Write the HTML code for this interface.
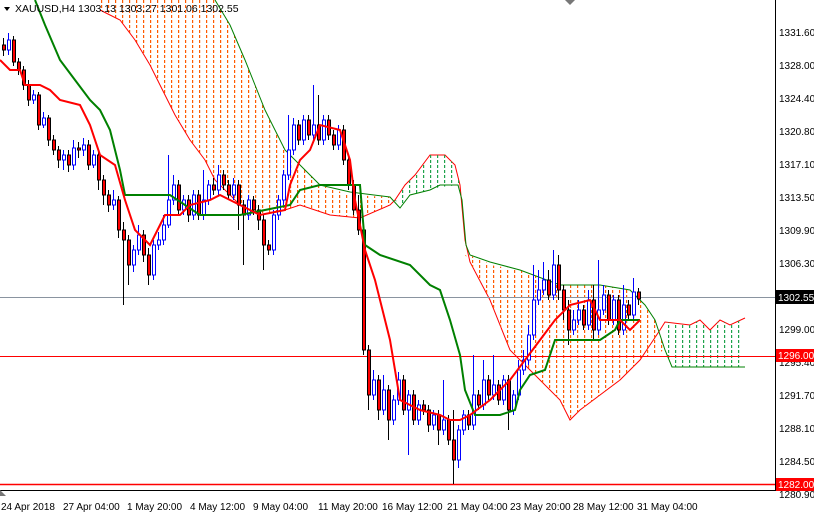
<!DOCTYPE html>
<html><head><meta charset="utf-8"><style>
body{margin:0;background:#fff;width:814px;height:514px;overflow:hidden;font-family:"Liberation Sans",sans-serif}
svg text{font-family:"Liberation Sans",sans-serif;font-size:10px}
</style></head><body>
<svg width="814" height="514" xmlns="http://www.w3.org/2000/svg">
<defs>
<pattern id="po" width="7" height="5" patternUnits="userSpaceOnUse"><rect x="3" y="0" width="1.2" height="3" fill="#ff5a00"/></pattern>
<pattern id="pg" width="7" height="5" patternUnits="userSpaceOnUse"><rect x="3" y="0" width="1.2" height="3" fill="#1fa34a"/></pattern>
</defs>
<rect width="814" height="514" fill="#fff"/>
<polygon fill="url(#po)" points="100,0 215,0 230,25 245,60 255,85 265,110 275,130 285,150 300,165 320,185 350,195 390,197 395,200 390,205 360,218 330,215 300,205 285,210 260,215 240,205 215,180 205,160 190,140 175,115 160,85 150,65 135,40 120,20 100,10"/>
<polyline fill="none" stroke="#ff0000" stroke-width="1" points="100,10 120,20 135,40 150,65 160,85 175,115 190,140 205,160 215,180 240,205 260,215 285,210 300,205 330,215 360,218 390,205 395,200 405,185 415,175 430,155 445,155 455,165 460,185 465,240 470,262 490,300 510,350 530,370 560,400 570,420 580,410 600,395 620,380 640,360 650,345 660,330 665,322 690,325 700,320 710,330 720,320 730,325 745,318"/>
<polygon fill="url(#pg)" points="395,200 405,185 415,175 430,155 445,155 455,165 460,185 440,187 430,190 410,195 400,208"/>
<polygon fill="url(#po)" points="465,255 480,258 490,265 520,270 560,285 600,285 630,290 645,305 655,320 665,350 660,352 640,360 620,380 600,395 580,410 570,420 560,400 530,370 510,350 490,300 470,262"/>
<polygon fill="url(#pg)" points="665,322 690,325 700,320 710,330 720,320 730,325 745,318 745,367 672,367 665,350"/>
<polyline fill="none" stroke="#008000" stroke-width="1" points="215,0 230,25 245,60 255,85 265,110 275,130 285,150 300,165 320,185 350,192 390,197 400,208 410,195 430,190 440,185 458,185 462,200 466,245 470,255 490,262 520,270 560,285 600,285 630,290 645,305 655,320 665,350 672,367 745,367"/>
<line x1="0" y1="297.5" x2="775" y2="297.5" stroke="#8a94a0"/>
<line x1="0" y1="356.5" x2="775" y2="356.5" stroke="#ff0000"/>
<line x1="0" y1="484.5" x2="775" y2="484.5" stroke="#ff0000" stroke-width="1.5"/>

<!-- up candles -->
<g stroke="#0000ff" fill="#fff" shape-rendering="crispEdges">
<path fill="none" d="M8.5 33V55M33.5 90V104M43.5 112V128M63.5 150V170M73.5 140V170M83.5 138V156M93.5 150V168M113.5 190V210M133.5 245V272M138.5 225V255M153.5 240V280M158.5 232V250M163.5 215V245M168.5 155V228M173.5 175V205M183.5 195V215M193.5 190V220M203.5 170V220M208.5 180V205M218.5 165V195M233.5 178V200M248.5 195V220M273.5 210V255M278.5 195V220M283.5 170V205M288.5 115V180M293.5 118V155M303.5 115V145M313.5 85V140M323.5 115V145M338.5 125V150M373.5 370V400M383.5 375V415M393.5 395V425M398.5 372V405M408.5 390V455M418.5 400V425M433.5 410V430M443.5 380V435M458.5 425V468M463.5 410V435M473.5 355V430M483.5 360V410M493.5 355V400M503.5 375V405M513.5 390V415M518.5 360V400M523.5 350V375M528.5 325V365M533.5 265V340M538.5 270V305M543.5 262V295M553.5 250V300M573.5 310V335M578.5 300V325M588.5 290V330M598.5 260V335M603.5 285V315M613.5 295V325M623.5 285V335M633.5 278V320"/>
<rect x="7.5" y="40" width="3" height="10"/><rect x="32.5" y="95" width="3" height="5"/><rect x="42.5" y="118" width="3" height="7"/><rect x="62.5" y="155" width="3" height="5"/><rect x="72.5" y="148" width="3" height="17"/><rect x="82.5" y="145" width="3" height="5"/><rect x="92.5" y="155" width="3" height="10"/><rect x="112.5" y="200" width="3" height="5"/><rect x="132.5" y="250" width="3" height="15"/><rect x="137.5" y="235" width="3" height="15"/><rect x="152.5" y="245" width="3" height="30"/><rect x="157.5" y="240" width="3" height="5"/><rect x="162.5" y="225" width="3" height="15"/><rect x="167.5" y="200" width="3" height="25"/><rect x="172.5" y="185" width="3" height="15"/><rect x="182.5" y="200" width="3" height="10"/><rect x="192.5" y="195" width="3" height="20"/><rect x="202.5" y="200" width="3" height="15"/><rect x="207.5" y="185" width="3" height="15"/><rect x="217.5" y="175" width="3" height="15"/><rect x="232.5" y="185" width="3" height="10"/><rect x="247.5" y="200" width="3" height="15"/><rect x="272.5" y="215" width="3" height="35"/><rect x="277.5" y="200" width="3" height="15"/><rect x="282.5" y="175" width="3" height="25"/><rect x="287.5" y="150" width="3" height="25"/><rect x="292.5" y="125" width="3" height="25"/><rect x="302.5" y="120" width="3" height="20"/><rect x="312.5" y="125" width="3" height="10"/><rect x="322.5" y="120" width="3" height="20"/><rect x="337.5" y="130" width="3" height="15"/><rect x="372.5" y="380" width="3" height="15"/><rect x="382.5" y="390" width="3" height="20"/><rect x="392.5" y="400" width="3" height="20"/><rect x="397.5" y="380" width="3" height="20"/><rect x="407.5" y="395" width="3" height="15"/><rect x="417.5" y="405" width="3" height="15"/><rect x="432.5" y="415" width="3" height="10"/><rect x="442.5" y="420" width="3" height="10"/><rect x="457.5" y="430" width="3" height="30"/><rect x="462.5" y="415" width="3" height="15"/><rect x="472.5" y="395" width="3" height="30"/><rect x="482.5" y="380" width="3" height="25"/><rect x="492.5" y="385" width="3" height="10"/><rect x="502.5" y="380" width="3" height="20"/><rect x="512.5" y="395" width="3" height="15"/><rect x="517.5" y="370" width="3" height="25"/><rect x="522.5" y="360" width="3" height="10"/><rect x="527.5" y="335" width="3" height="25"/><rect x="532.5" y="300" width="3" height="35"/><rect x="537.5" y="290" width="3" height="10"/><rect x="542.5" y="280" width="3" height="10"/><rect x="552.5" y="265" width="3" height="30"/><rect x="572.5" y="320" width="3" height="10"/><rect x="577.5" y="310" width="3" height="10"/><rect x="587.5" y="300" width="3" height="25"/><rect x="597.5" y="310" width="3" height="20"/><rect x="602.5" y="295" width="3" height="15"/><rect x="612.5" y="300" width="3" height="20"/><rect x="622.5" y="305" width="3" height="25"/><rect x="632.5" y="292" width="3" height="23"/>
</g>
<!-- down candles -->
<g stroke="#000" fill="#ff0000" shape-rendering="crispEdges">
<path fill="none" d="M3.5 38V56M13.5 36V66M18.5 58V75M23.5 66V90M28.5 80V106M38.5 92V130M48.5 115V146M53.5 135V155M58.5 146V168M68.5 150V172M78.5 142V158M88.5 140V170M98.5 150V190M103.5 175V205M108.5 190V212M118.5 196V238M123.5 222V305M128.5 235V285M143.5 230V262M148.5 248V285M178.5 180V215M188.5 195V222M198.5 190V220M213.5 178V195M223.5 170V190M228.5 180V200M238.5 180V230M243.5 200V265M253.5 196V215M258.5 205V230M263.5 215V270M268.5 240V255M298.5 120V145M308.5 115V140M318.5 95V145M328.5 115V140M333.5 130V150M343.5 125V165M348.5 155V190M353.5 180V215M358.5 195V235M363.5 225V355M368.5 345V410M378.5 375V420M388.5 385V440M403.5 375V415M413.5 390V425M423.5 400V415M428.5 405V432M438.5 410V445M448.5 415V445M453.5 410V484M468.5 410V430M478.5 390V410M488.5 375V400M498.5 380V405M508.5 375V430M548.5 270V300M558.5 255V300M563.5 285V320M568.5 300V345M583.5 305V330M593.5 285V340M608.5 290V325M618.5 295V335M628.5 300V320M638.5 288V305"/>
<rect x="2.5" y="45" width="3" height="5"/><rect x="12.5" y="40" width="3" height="22"/><rect x="17.5" y="62" width="3" height="8"/><rect x="22.5" y="70" width="3" height="15"/><rect x="27.5" y="85" width="3" height="15"/><rect x="37.5" y="95" width="3" height="30"/><rect x="47.5" y="118" width="3" height="22"/><rect x="52.5" y="140" width="3" height="10"/><rect x="57.5" y="150" width="3" height="10"/><rect x="67.5" y="155" width="3" height="10"/><rect x="77.5" y="148" width="3" height="2"/><rect x="87.5" y="145" width="3" height="20"/><rect x="97.5" y="155" width="3" height="25"/><rect x="102.5" y="180" width="3" height="15"/><rect x="107.5" y="195" width="3" height="10"/><rect x="117.5" y="200" width="3" height="30"/><rect x="122.5" y="230" width="3" height="10"/><rect x="127.5" y="240" width="3" height="25"/><rect x="142.5" y="235" width="3" height="20"/><rect x="147.5" y="255" width="3" height="20"/><rect x="177.5" y="185" width="3" height="25"/><rect x="187.5" y="200" width="3" height="15"/><rect x="197.5" y="195" width="3" height="20"/><rect x="212.5" y="185" width="3" height="5"/><rect x="222.5" y="175" width="3" height="10"/><rect x="227.5" y="185" width="3" height="10"/><rect x="237.5" y="185" width="3" height="20"/><rect x="242.5" y="205" width="3" height="10"/><rect x="252.5" y="200" width="3" height="10"/><rect x="257.5" y="210" width="3" height="10"/><rect x="262.5" y="220" width="3" height="25"/><rect x="267.5" y="245" width="3" height="5"/><rect x="297.5" y="125" width="3" height="15"/><rect x="307.5" y="120" width="3" height="15"/><rect x="317.5" y="125" width="3" height="15"/><rect x="327.5" y="120" width="3" height="15"/><rect x="332.5" y="135" width="3" height="10"/><rect x="342.5" y="130" width="3" height="30"/><rect x="347.5" y="160" width="3" height="25"/><rect x="352.5" y="185" width="3" height="25"/><rect x="357.5" y="210" width="3" height="20"/><rect x="362.5" y="230" width="3" height="120"/><rect x="367.5" y="350" width="3" height="45"/><rect x="377.5" y="380" width="3" height="30"/><rect x="387.5" y="390" width="3" height="30"/><rect x="402.5" y="380" width="3" height="30"/><rect x="412.5" y="395" width="3" height="25"/><rect x="422.5" y="405" width="3" height="5"/><rect x="427.5" y="410" width="3" height="15"/><rect x="437.5" y="415" width="3" height="15"/><rect x="447.5" y="420" width="3" height="20"/><rect x="452.5" y="440" width="3" height="20"/><rect x="467.5" y="415" width="3" height="10"/><rect x="477.5" y="395" width="3" height="10"/><rect x="487.5" y="380" width="3" height="15"/><rect x="497.5" y="385" width="3" height="15"/><rect x="507.5" y="380" width="3" height="30"/><rect x="547.5" y="280" width="3" height="15"/><rect x="557.5" y="265" width="3" height="25"/><rect x="562.5" y="290" width="3" height="20"/><rect x="567.5" y="310" width="3" height="20"/><rect x="582.5" y="310" width="3" height="15"/><rect x="592.5" y="300" width="3" height="30"/><rect x="607.5" y="295" width="3" height="25"/><rect x="617.5" y="300" width="3" height="30"/><rect x="627.5" y="305" width="3" height="10"/><rect x="637.5" y="292" width="3" height="7"/>
</g>

<polyline fill="none" stroke="#008000" stroke-width="2" points="35,0 45,25 60,60 75,80 90,100 100,110 110,130 120,170 125,195 170,195 200,215 240,215 290,205 300,190 320,185 360,185 365,245 380,255 410,265 430,285 440,290 450,320 460,355 465,390 475,415 500,415 515,410 520,390 530,375 545,370 555,340 565,340 600,340 615,330 620,320 640,320"/>
<polyline fill="none" stroke="#ff0000" stroke-width="2" points="0,60 10,70 20,70 25,85 40,85 50,90 60,100 80,105 90,125 100,155 115,165 125,200 135,230 150,245 165,215 180,215 190,205 210,200 220,195 240,205 260,215 285,210 290,185 300,160 310,150 320,125 340,130 350,160 355,200 365,250 375,280 390,340 400,400 420,410 440,415 450,420 460,420 470,415 490,400 510,380 525,360 540,340 555,320 570,305 590,300 600,320 620,320 630,330 640,320"/>
<line x1="775.5" y1="0" x2="775.5" y2="490" stroke="#000"/>
<line x1="0" y1="490.5" x2="776" y2="490.5" stroke="#000"/>
<polygon points="0,490 0,496 6,496" fill="#777"/>
<polygon points="565,0 575,0 570,5" fill="#777"/>
<g fill="#000">
<text x="779" y="36">1331.60</text><text x="779" y="69">1328.00</text><text x="779" y="102">1324.40</text><text x="779" y="135">1320.80</text><text x="779" y="168">1317.10</text><text x="779" y="201">1313.50</text><text x="779" y="234">1309.90</text><text x="779" y="267">1306.30</text><text x="779" y="333">1299.00</text><text x="779" y="366">1295.40</text><text x="779" y="399">1291.70</text><text x="779" y="432">1288.10</text><text x="779" y="465">1284.50</text><text x="779" y="498">1280.90</text>
</g>
<rect x="776" y="290" width="38" height="14" fill="#000"/><text x="778" y="301" fill="#fff">1302.55</text>
<rect x="776" y="349" width="38" height="13" fill="#ff0000"/><text x="778" y="359" fill="#fff">1296.00</text>
<rect x="776" y="478" width="38" height="13" fill="#ff0000"/><text x="778" y="488" fill="#fff">1282.00</text>
<g fill="#000">
<text x="1" y="510">24 Apr 2018</text><text x="63" y="510">27 Apr 04:00</text><text x="127" y="510">1 May 20:00</text><text x="190" y="510">4 May 12:00</text><text x="253" y="510">9 May 04:00</text><text x="318" y="510">11 May 20:00</text><text x="382" y="510">16 May 12:00</text><text x="447" y="510">21 May 04:00</text><text x="510" y="510">23 May 20:00</text><text x="573" y="510">28 May 12:00</text><text x="637" y="510">31 May 04:00</text>
</g>
<polygon points="4,7 10,7 7,11" fill="#000"/>
<text x="15" y="12" fill="#000" style="font-size:10.5px">XAUUSD,H4  1303.13 1303.27 1301.06 1302.55</text>
</svg>
</body></html>
